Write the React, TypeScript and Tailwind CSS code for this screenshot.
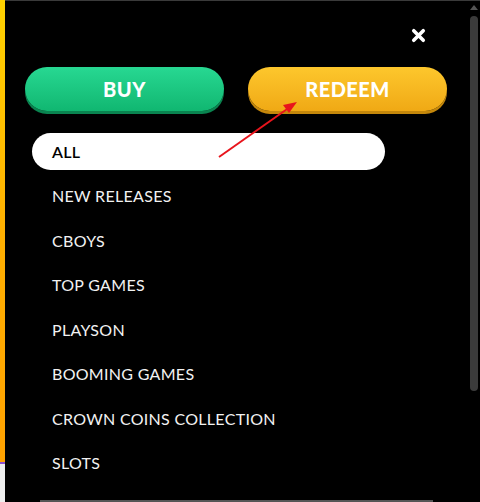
import { X } from "lucide-react";

const categories = [
  "NEW RELEASES",
  "CBOYS",
  "TOP GAMES",
  "PLAYSON",
  "BOOMING GAMES",
  "CROWN COINS COLLECTION",
  "SLOTS",
];

const App = () => {
  return (
    <div className="relative flex w-[480px] h-[502px] overflow-hidden bg-black font-['Lato',sans-serif]">
      <div className="flex flex-col w-[5px] shrink-0">
        <div className="flex-1 bg-gradient-to-b from-[#ffd200] via-[#ffb000] to-[#ffa200]" />
        <div className="h-[2px] bg-[#8a4fd0]" />
        <div className="h-[38px] bg-[#eeeeee]" />
      </div>

      <div className="flex flex-col flex-1 border-t border-[#3a3a3a]">
        <div className="flex justify-end pt-[25px] pr-[40px] h-[66px]">
          <X className="w-[19px] h-[19px] text-white" strokeWidth={4.5} />
        </div>

        <div className="flex gap-[24px] pl-[20px]">
          <button className="w-[199px] h-[44px] rounded-full bg-gradient-to-b from-[#27d892] to-[#10b771] shadow-[0_3px_0_#0a8450] text-white text-[20px] font-black tracking-wide">
            BUY
          </button>
          <button className="w-[199px] h-[44px] rounded-full bg-gradient-to-b from-[#fdc72c] to-[#f0a914] shadow-[0_3px_0_#c4870b] text-white text-[20px] font-black tracking-wide">
            REDEEM
          </button>
        </div>

        <div className="flex flex-col mt-[22px] pl-[27px]">
          <div className="flex items-center w-[353px] h-[37px] rounded-full bg-white pl-[20px] mb-[4px] text-[16px] font-semibold text-black tracking-[0.3px]">
            ALL
          </div>
          {categories.map((c) => (
            <div key={c} className="flex items-center h-[44.5px] pl-[20px] text-[16px] text-[#f2f2f2] tracking-[0.3px]">
              {c}
            </div>
          ))}
        </div>

        <div className="mt-auto mx-[35px] h-[2px] bg-[#555555]" />
      </div>

      <div className="flex flex-col items-center w-[12px] shrink-0 pt-[4px] border-t border-[#3a3a3a]">
        <div className="w-0 h-0 border-l-[4px] border-r-[4px] border-b-[5px] border-l-transparent border-r-transparent border-b-[#555555]" />
        <div className="mt-[6px] w-[8px] h-[375px] rounded-full bg-[#3b3b3b]" />
      </div>

      <svg className="absolute left-0 top-0 pointer-events-none" width="480" height="502">
        <line x1="219" y1="157" x2="290" y2="107" stroke="#e8141c" strokeWidth="2" />
        <polygon points="297,102 283,105 289,113" fill="#e8141c" />
      </svg>
    </div>
  );
};

export default App;
